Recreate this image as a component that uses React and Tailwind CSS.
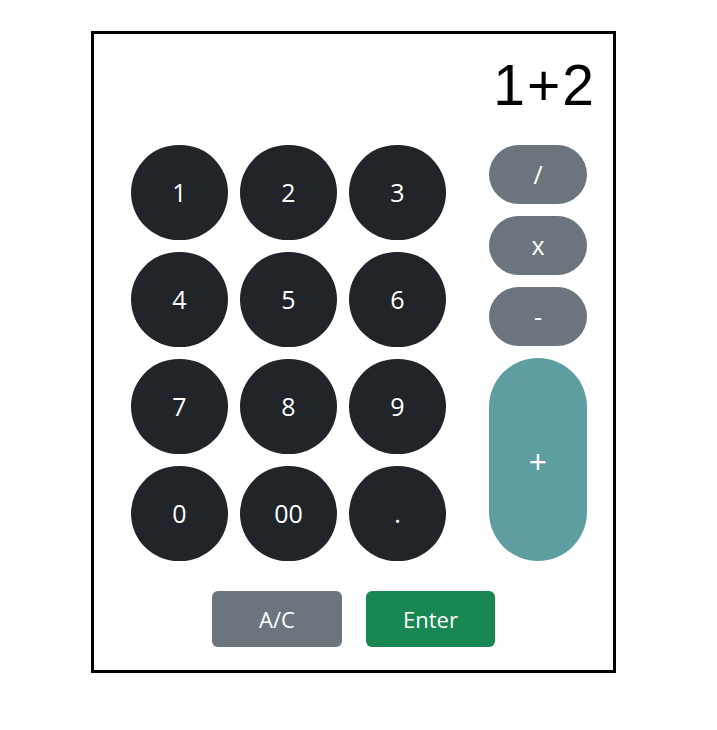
import React, { useState } from 'react';

const digits = ['1', '2', '3', '4', '5', '6', '7', '8', '9', '0', '00', '.'];

export default function App() {
  const [expr, setExpr] = useState('1+2');

  const press = (v) => setExpr((e) => e + v);

  return (
    <div className="pt-[31px] pl-[91px] bg-white min-h-screen" style={{ fontFamily: '"Open Sans", "Noto Sans", sans-serif' }}>
      <div className="w-[525px] h-[642px] border-[3px] border-black flex flex-col">
        {/* display */}
        <div
          className="pt-[23px] pr-[17px] text-right text-[57px] leading-none tracking-[2px] text-black h-[111px]"
          style={{ fontFamily: '"Liberation Sans", Arial, sans-serif' }}
        >
          {expr}
        </div>

        <div className="flex pl-[37px]">
          <div className="grid grid-cols-[repeat(3,97px)] auto-rows-[95px] gap-[12px]">
            {digits.map((d) => (
              <button
                key={d}
                onClick={() => press(d)}
                className="rounded-full bg-[#212529] text-white text-[25px] flex items-center justify-center"
              >
                {d}
              </button>
            ))}
          </div>

          {/* operators */}
          <div className="ml-[43px] w-[98px] flex flex-col gap-[12px]">
            <button onClick={() => press('/')} className="h-[59px] rounded-full bg-[#6c757d] text-white text-[25px]">/</button>
            <button onClick={() => press('x')} className="h-[59px] rounded-full bg-[#6c757d] text-white text-[25px]">x</button>
            <button onClick={() => press('-')} className="h-[59px] rounded-full bg-[#6c757d] text-white text-[25px]">-</button>
            <button onClick={() => press('+')} className="h-[203px] pt-[4px] rounded-full bg-[#5f9ea0] text-white text-[32px]">+</button>
          </div>
        </div>

        <div className="mt-[30px] flex justify-center gap-[24px]">
          <button onClick={() => setExpr('')} className="w-[130px] h-[56px] rounded-md bg-[#6c757d] text-white text-[22px]">A/C</button>
          <button className="w-[129px] h-[56px] rounded-md bg-[#198754] text-white text-[22px]">Enter</button>
        </div>
      </div>
    </div>
  );
}
